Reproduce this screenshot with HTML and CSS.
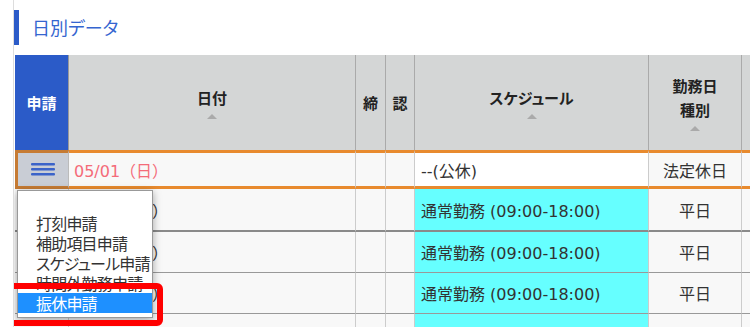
FILE: index.html
```html
<!DOCTYPE html>
<html lang="ja">
<head>
    <meta charset="UTF-8">
    <meta name="viewport" content="width=device-width, initial-scale=1.0">
    <title>日別データ</title>
    <link rel="stylesheet" href="styles.css">
</head>
<body>
    <div class="page">
        <h2 class="section-title">日別データ</h2>
        <table class="daily">
            <colgroup>
                <col class="c-req">
                <col class="c-date">
                <col class="c-lock">
                <col class="c-ok">
                <col class="c-sched">
                <col class="c-kind">
                <col class="c-more">
            </colgroup>
            <thead>
                <tr>
                    <th class="req">申請</th>
                    <th>日付<span class="sort"></span></th>
                    <th>締</th>
                    <th>認</th>
                    <th>スケジュール<span class="sort"></span></th>
                    <th>勤務日<br>種別<span class="sort"></span></th>
                    <th></th>
                </tr>
            </thead>
            <tbody>
                <!-- current row: the menu below is opened from its button -->
                <tr class="current">
                    <td class="menu-cell">
                        <button class="menu-btn">
                            <svg width="24" height="13" viewBox="0 0 24 13">
                                <rect x="0" y="0" width="24" height="2.5" rx="1" fill="#3b63c9"/>
                                <rect x="0" y="5" width="24" height="2.5" rx="1" fill="#3b63c9"/>
                                <rect x="0" y="10" width="24" height="2.5" rx="1" fill="#3b63c9"/>
                            </svg>
                        </button>
                    </td>
                    <td class="date holiday">05/01（日）</td>
                    <td></td>
                    <td></td>
                    <td class="sched off">--(公休)</td>
                    <td class="kind">法定休日</td>
                    <td></td>
                </tr>
                <tr class="first-sep">
                    <td></td>
                    <td class="date">05/02（月）</td>
                    <td></td>
                    <td></td>
                    <td class="sched work">通常勤務 (09:00-18:00)</td>
                    <td class="kind">平日</td>
                    <td></td>
                </tr>
                <tr>
                    <td></td>
                    <td class="date">05/03（火）</td>
                    <td></td>
                    <td></td>
                    <td class="sched work">通常勤務 (09:00-18:00)</td>
                    <td class="kind">平日</td>
                    <td></td>
                </tr>
                <tr>
                    <td></td>
                    <td class="date">05/04（水）</td>
                    <td></td>
                    <td></td>
                    <td class="sched work">通常勤務 (09:00-18:00)</td>
                    <td class="kind">平日</td>
                    <td></td>
                </tr>
                <!-- next row only starts inside the frame -->
                <tr>
                    <td></td>
                    <td class="date"></td>
                    <td></td>
                    <td></td>
                    <td class="sched work"></td>
                    <td class="kind"></td>
                    <td></td>
                </tr>
            </tbody>
        </table>

        <ul class="req-menu">
            <li>打刻申請</li>
            <li>補助項目申請</li>
            <li>スケジュール申請</li>
            <li>時間外勤務申請</li>
            <li class="active">振休申請</li>
        </ul>
        <div class="highlight"></div>
    </div>
</body>
</html>
```

FILE: styles.css
```css
* {
    box-sizing: border-box;
}

body {
    margin: 0;
    font-family: "Noto Sans CJK JP", "Noto Sans", sans-serif;
    font-feature-settings: "palt";
    color: #333;
    background-color: #fff;
    overflow: hidden;
}

.page {
    position: relative;
    margin-left: 13px;
    padding-top: 10px;
    height: 327px;
    overflow: hidden;
    border-left: 1px solid #ddd;
}

.section-title {
    margin: 0 0 10px 0;
    height: 35px;
    line-height: 35px;
    padding-left: 13px;
    border-left: 5px solid #2b5bc8;
    font-size: 18px;
    font-weight: normal;
    color: #3565d0;
}

/* Daily table */
.daily {
    margin-left: 1px;
    width: 827px;
    table-layout: fixed;
    border-collapse: separate;
    border-spacing: 0;
    font-family: "DejaVu Sans", "Noto Sans CJK JP", sans-serif;
    font-size: 16px;
}

.c-req { width: 54px; }
.c-date { width: 287px; }
.c-lock { width: 30px; }
.c-ok { width: 29px; }
.c-sched { width: 234px; }
.c-kind { width: 93px; }
.c-more { width: 100px; }

.daily th {
    box-sizing: content-box;
    height: 95px;
    padding: 0;
    background-color: #d4d6d6;
    border-right: 1px solid #aaa;
    font-family: "Noto Sans CJK JP", sans-serif;
    font-size: 15px;
    font-weight: bold;
    line-height: 24px;
    color: #222;
    text-align: center;
    vertical-align: middle;
}

.daily th.req {
    background-color: #2b5bc8;
    color: #fff;
    border-right-color: #999;
}

.sort {
    display: block;
    width: 0;
    height: 0;
    margin: 4px auto 0;
    border-left: 5px solid transparent;
    border-right: 5px solid transparent;
    border-bottom: 5px solid #aaa;
}

.daily td {
    box-sizing: content-box;
    height: 40px;
    padding: 0;
    background-color: #f8f8f8;
    border-right: 1px solid #ccc;
    border-bottom: 1px solid #999;
    white-space: nowrap;
    overflow: hidden;
}

.daily tr.first-sep td {
    height: 41px;
    border-bottom: 2px solid #8a8a8a;
}

.daily tr.current td {
    height: 33px;
    border-top: 3px solid #e88a2e;
    border-bottom: 3px solid #e88a2e;
}

.daily tr.current td.menu-cell {
    background-color: #c9cdd5;
    border-left: 3px solid #c67b34;
    border-top-color: #c67b34;
    border-bottom-color: #c67b34;
    border-right-color: #bbb;
    text-align: center;
}

.menu-btn {
    display: block;
    width: 100%;
    height: 33px;
    padding: 0;
    border: none;
    background: none;
    cursor: pointer;
}

.menu-btn svg {
    display: block;
    margin: 0 auto;
}

.date {
    padding-left: 5px !important;
    font-size: 16px;
    font-feature-settings: normal;
}

.date.holiday {
    color: #f46b79;
}

.sched {
    padding-left: 6px !important;
}

.sched.off {
    background-color: #fff !important;
}

.sched.work {
    background-color: #66ffff !important;
}

.kind {
    text-align: center;
}

/* Request menu opened from the row button */
.req-menu {
    position: absolute;
    left: 3px;
    top: 190px;
    width: 136px;
    height: 128px;
    margin: 0;
    padding: 22px 0 0 0;
    list-style: none;
    background-color: #fff;
    border: 1px solid #999;
    box-shadow: 0 2px 8px rgba(0, 0, 0, 0.35);
    font-size: 16px;
    line-height: 20px;
    letter-spacing: -0.8px;
    overflow: hidden;
}

.req-menu li {
    padding-left: 18px;
    white-space: nowrap;
}

.req-menu li.active {
    background-color: #1e90ff;
    color: #fff;
}

.highlight {
    position: absolute;
    left: -7px;
    top: 283px;
    width: 156px;
    height: 43px;
    border: 6px solid #ff0000;
    border-radius: 6px;
}
```
